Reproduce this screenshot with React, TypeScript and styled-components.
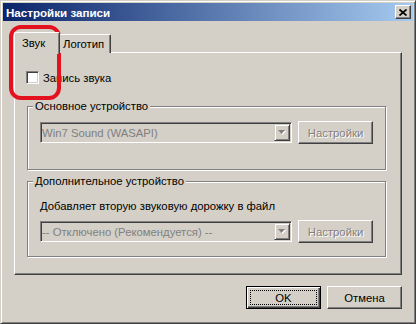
import styled, { createGlobalStyle } from 'styled-components'

const GlobalStyle = createGlobalStyle`
  * { box-sizing: border-box; }
  html, body { margin: 0; padding: 0; background: #d4d0c8; }
  body {
    font-family: 'Liberation Sans', Arial, sans-serif;
    font-size: 11.3px;
    color: #000;
  }
`

const Window = styled.div`
  position: relative;
  width: 416px;
  height: 324px;
  display: flex;
  flex-direction: column;
  padding: 2px;
  background: #d4d0c8;
  border: 1px solid;
  border-color: #d4d0c8 #404040 #404040 #d4d0c8;
  box-shadow: inset 1px 1px #fff, inset -1px -1px #808080;
`

const TitleBar = styled.div`
  height: 18px;
  flex-shrink: 0;
  display: flex;
  align-items: center;
  justify-content: space-between;
  padding: 0 2px 0 3px;
  background: linear-gradient(to right, #0a246a, #a6caf0);
`

const Title = styled.span`
  color: #fff;
  font-weight: bold;
  font-size: 11.6px;
`

const CloseButton = styled.div`
  width: 16px;
  height: 14px;
  display: flex;
  align-items: center;
  justify-content: center;
  background: #d4d0c8;
  border: 1px solid;
  border-color: #fff #404040 #404040 #fff;
  box-shadow: inset -1px -1px #808080;
`

const Body = styled.div`
  flex: 1;
  display: flex;
  flex-direction: column;
  padding: 11px;
`

const TabStrip = styled.div`
  height: 21px;
  flex-shrink: 0;
  display: flex;
  align-items: flex-start;
  position: relative;
  z-index: 1;
  margin-bottom: -1px;
`

const Tab = styled.div<{ $active?: boolean; $w: number }>`
  width: ${({ $w }) => $w}px;
  height: ${({ $active }) => ($active ? 22 : 19)}px;
  margin-top: ${({ $active }) => ($active ? 0 : 2)}px;
  margin-right: ${({ $active }) => ($active ? -2 : 0)}px;
  position: relative;
  z-index: ${({ $active }) => ($active ? 1 : 0)};
  display: flex;
  align-items: center;
  padding: ${({ $active }) => ($active ? '0 0 2px 7px' : '0 0 0 4px')};
  background: #d4d0c8;
  border-top: 1px solid #fff;
  border-left: 1px solid #fff;
  border-right: 1px solid #404040;
  border-radius: 2px 2px 0 0;
  box-shadow: inset -1px 0 #808080;
`

const Panel = styled.div`
  height: 223px;
  flex-shrink: 0;
  display: flex;
  flex-direction: column;
  padding: 0 15px 0 12px;
  border: 1px solid;
  border-color: #fff #404040 #404040 #fff;
  box-shadow: inset -1px -1px #808080;
`

const CheckRow = styled.label`
  display: flex;
  align-items: center;
  flex-shrink: 0;
  gap: 4px;
  margin: 18px 0 0 -1px;
  height: 13px;
`

const CheckBox = styled.span`
  width: 13px;
  height: 13px;
  background: #fff;
  border: 1px solid;
  border-color: #808080 #fff #fff #808080;
  box-shadow: inset 1px 1px #404040, inset -1px -1px #d4d0c8;
`

const Group = styled.fieldset<{ $gap: number; $h: number }>`
  display: block;
  flex-shrink: 0;
  height: ${({ $h }) => $h}px;
  margin: ${({ $gap }) => $gap}px 0 0 0;
  padding: 8px 12px 0 12px;
  min-width: 0;
  border: 1px solid #808080;
  box-shadow: inset 1px 1px #fff, 1px 1px #fff;
`

const GroupTitle = styled.legend`
  margin-left: -7px;
  padding: 0 2px;
  line-height: 13px;
  background: #d4d0c8;
`

const Hint = styled.div`
  line-height: 13px;
  margin: 4px 0 7px;
`

const Row = styled.div`
  display: flex;
  align-items: center;
  gap: 6px;
`

const Combo = styled.div`
  flex: 1;
  height: 21px;
  display: flex;
  align-items: center;
  padding: 1px;
  background: #d4d0c8;
  border: 1px solid;
  border-color: #808080 #fff #fff #808080;
  box-shadow: inset 1px 1px #404040, inset -1px -1px #d4d0c8;
`

const ComboValue = styled.span`
  flex: 1;
  color: #808080;
  white-space: nowrap;
`

const ComboArrow = styled.span`
  width: 16px;
  height: 17px;
  display: flex;
  align-items: center;
  justify-content: center;
  background: #d4d0c8;
  border: 1px solid;
  border-color: #d4d0c8 #404040 #404040 #d4d0c8;
  box-shadow: inset 1px 1px #fff, inset -1px -1px #808080;
`

const Button = styled.button<{ $default?: boolean }>`
  width: 75px;
  height: 23px;
  display: flex;
  padding: 0;
  font: inherit;
  color: #000;
  background: #d4d0c8;
  border: 1px solid;
  border-color: ${({ $default }) => ($default ? '#000' : '#fff #404040 #404040 #fff')};
  box-shadow: ${({ $default }) =>
    $default
      ? 'inset 1px 1px #fff, inset -1px -1px #404040, inset -2px -2px #808080'
      : 'inset -1px -1px #808080'};
  &:disabled {
    color: #808080;
    text-shadow: 1px 1px #fff;
  }
`

const ButtonLabel = styled.span<{ $focus?: boolean }>`
  flex: 1;
  display: flex;
  align-items: center;
  justify-content: center;
  margin: 3px;
  border: 1px dotted ${({ $focus }) => ($focus ? '#000' : 'transparent')};
`

const Footer = styled.div`
  display: flex;
  flex-shrink: 0;
  justify-content: flex-end;
  gap: 6px;
  margin-top: 11px;
`

const Highlight = styled.div`
  position: absolute;
  left: 8px;
  top: 24px;
  width: 52px;
  height: 75px;
  border: 4px solid #e4121e;
  border-radius: 12px;
  pointer-events: none;
`

const Arrow = () => (
  <svg width="8" height="5" viewBox="0 0 8 5">
    <polygon points="1,1 8,1 4.5,5" fill="#fff" />
    <polygon points="0,0 7,0 3.5,4" fill="#808080" />
  </svg>
)

const Select = ({ value }: { value: string }) => (
  <Row>
    <Combo>
      <ComboValue>{value}</ComboValue>
      <ComboArrow>
        <Arrow />
      </ComboArrow>
    </Combo>
    <Button disabled>
      <ButtonLabel>{'Настройки'}</ButtonLabel>
    </Button>
  </Row>
)

const App = () => {
  return (
    <>
      <GlobalStyle />
      <Window>
        <TitleBar>
          <Title>{'Настройки записи'}</Title>
          <CloseButton>
            <svg width="8" height="7" viewBox="0 0 8 7">
              <path d="M0.5 0.5 L7.5 6.5 M7.5 0.5 L0.5 6.5" stroke="#000" strokeWidth="1.7" />
            </svg>
          </CloseButton>
        </TitleBar>
        <Body>
          <TabStrip>
            <Tab $active $w={46}>{'Звук'}</Tab>
            <Tab $w={53}>{'Логотип'}</Tab>
          </TabStrip>
          <Panel>
            <CheckRow>
              <CheckBox />
              {'Запись звука'}
            </CheckRow>
            <Group $gap={16} $h={70}>
              <GroupTitle>{'Основное устройство'}</GroupTitle>
              <Select value={'Win7 Sound (WASAPI)'} />
            </Group>
            <Group $gap={5} $h={82}>
              <GroupTitle>{'Дополнительное устройство'}</GroupTitle>
              <Hint>{'Добавляет вторую звуковую дорожку в файл'}</Hint>
              <Select value={'-- Отключено (Рекомендуется) --'} />
            </Group>
          </Panel>
          <Footer>
            <Button $default>
              <ButtonLabel $focus>{'OK'}</ButtonLabel>
            </Button>
            <Button>
              <ButtonLabel>{'Отмена'}</ButtonLabel>
            </Button>
          </Footer>
        </Body>
        <Highlight />
      </Window>
    </>
  )
}

export default App
